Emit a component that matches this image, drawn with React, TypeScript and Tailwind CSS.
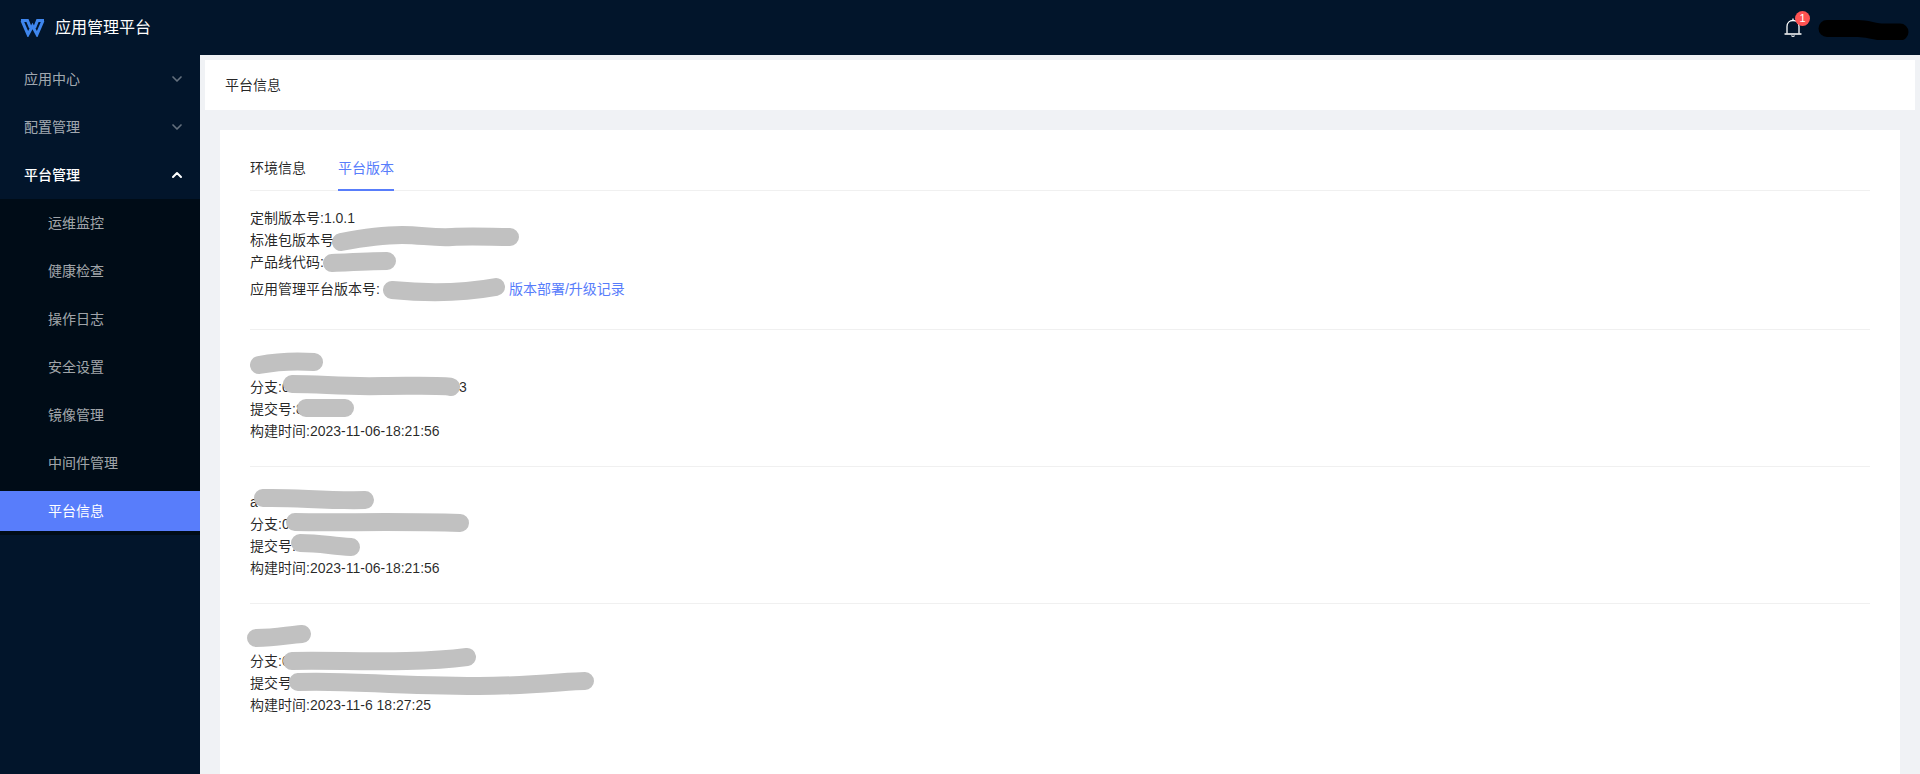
import React from 'react';
import { ChevronDown, ChevronUp } from 'lucide-react';

const FONT = 'font-["Liberation_Sans","Noto_Sans_CJK_SC",sans-serif]';

const subItems = ['运维监控', '健康检查', '操作日志', '安全设置', '镜像管理', '中间件管理', '平台信息'];

// grey marker strokes that hide parts of the text
const Scribble: React.FC<{ x: number; y: number; w: number; h: number; d: string; sw?: number; color?: string }> = ({
  x,
  y,
  w,
  h,
  d,
  sw = 18,
  color = '#c1c1c1',
}) => (
  <svg className="absolute" style={{ left: x, top: y }} width={w} height={h} viewBox={`0 0 ${w} ${h}`} fill="none">
    <path d={d} stroke={color} strokeWidth={sw} strokeLinecap="round" strokeLinejoin="round" />
  </svg>
);

const TopItem: React.FC<{ label: string; open?: boolean }> = ({ label, open }) => (
  <div className={`my-1 flex h-10 items-center justify-between pl-6 pr-[15px] ${open ? 'font-medium text-white' : 'text-[#ffffffa6]'}`}>
    <span>{label}</span>
    {open ? <ChevronUp size={16} strokeWidth={3} /> : <ChevronDown size={16} strokeWidth={2.5} className="opacity-60" />}
  </div>
);

const Row: React.FC<{ children: React.ReactNode; className?: string }> = ({ children, className = '' }) => (
  <div className={`h-[22px] whitespace-nowrap leading-[22px] ${className}`}>{children}</div>
);

const App: React.FC = () => {
  return (
    <div className={`flex h-[774px] w-[1920px] flex-col overflow-hidden bg-[#f0f2f5] text-sm text-[#000000d9] ${FONT}`}>
      {/* Header */}
      <header className="flex h-[55px] shrink-0 items-center bg-[#02152b] pl-5 pr-[10px] text-white">
        <svg width="25" height="18" viewBox="0 0 25 18" fill="none" stroke="#3f86ee" strokeWidth="3">
          <path d="M2 1.6L8 15.5L12.5 7L17 15.5L23 1.6" />
          <path d="M1 1.6H7.5L10.5 9" />
          <path d="M24 1.6H17.5L14.5 9" />
        </svg>
        <span className="ml-[10px] text-base">应用管理平台</span>
        <div className="ml-auto flex items-center">
          <div className="relative">
            <svg width="18" height="22" viewBox="0 0 18 22" fill="none" stroke="#ffffff" strokeWidth="1.3" className="block">
              <path d="M3 16.5V9.5C3 6 5.5 3.5 9 3.5C12.5 3.5 15 6 15 9.5V16.5" />
              <path d="M1 17H17" strokeLinecap="round" />
              <path d="M7.5 18.5C7.7 19.6 10.3 19.6 10.5 18.5" />
              <path d="M9 1.5V3.5" />
            </svg>
            <span className="absolute left-[11px] top-[-6px] flex h-[15px] w-[15px] items-center justify-center rounded-full bg-[#ff5252] text-[11px] leading-none text-white">
              1
            </span>
          </div>
          <div className="relative ml-4 h-6 w-[92px]">
            <Scribble x={0} y={0} w={92} h={24} sw={17} color="#000000" d="M9 12.5H40C50 12.5 56 16 66 16H82" />
          </div>
        </div>
      </header>

      <div className="flex min-h-0 flex-1">
        {/* Sidebar */}
        <aside className="flex w-[200px] shrink-0 flex-col bg-[#02152b]">
          <TopItem label="应用中心" />
          <TopItem label="配置管理" />
          <TopItem label="平台管理" open />
          <div className="flex flex-col bg-[#000c17]">
            {subItems.map((item) => (
              <div
                key={item}
                className={`my-1 flex h-10 items-center pl-12 ${item === '平台信息' ? 'bg-[#587dfb] text-white' : 'text-[#ffffffa6]'}`}
              >
                {item}
              </div>
            ))}
          </div>
        </aside>

        {/* Main */}
        <main className="min-w-0 flex-1 pt-[5px]">
          <div className="mx-[5px] flex h-[50px] items-center bg-white pl-5">平台信息</div>

          <div className="mx-5 mt-5 h-[700px] bg-white px-[30px] pt-[15px]">
            {/* Tabs */}
            <div className="mb-4 flex h-[46px] gap-8 border-b border-[#f0f0f0]">
              <div className="py-3 leading-[22px]">环境信息</div>
              <div className="h-[46px] border-b-2 border-[#587dfb] py-3 leading-[22px] text-[#587dfb]">平台版本</div>
            </div>

            {/* Versions */}
            <Row>定制版本号:1.0.1</Row>
            <Row className="relative">
              标准包版本号:
              <Scribble x={82} y={-5} w={200} h={30} d="M9 18C30 14 50 11 70 11C90 11 100 14 120 13C140 12 160 13 178 13" />
            </Row>
            <Row className="relative">
              产品线代码:
              <Scribble x={73} y={-5} w={90} h={30} d="M9 17C30 16 50 15 64 15" />
            </Row>
            <div className="relative flex h-8 items-center whitespace-nowrap">
              <span>应用管理平台版本号:</span>
              <Scribble x={133} y={0} w={130} h={32} d="M9 17C40 20 80 20 113 14" />
              <span className="ml-[129px] text-[#587dfb]">版本部署/升级记录</span>
            </div>

            <div className="my-6 h-px bg-[#f0f0f0]" />

            <Row className="relative">
              <Scribble x={0} y={-6} w={90} h={30} d="M9 17C30 13 50 13 64 14" />
            </Row>
            <Row className="relative">
              分支:0
              <Scribble x={33} y={-6} w={190} h={30} d="M9 14C40 14 60 17 100 16C130 16 160 15 168 17" />
              <span className="absolute left-[209px]">3</span>
            </Row>
            <Row className="relative">
              提交号:8
              <Scribble x={47} y={-6} w={70} h={30} d="M9 16H48" />
            </Row>
            <Row>构建时间:2023-11-06-18:21:56</Row>

            <div className="my-6 h-px bg-[#f0f0f0]" />

            <Row className="relative">
              a
              <Scribble x={4} y={-6} w={130} h={30} d="M9 13C40 12 70 16 111 15" />
            </Row>
            <Row className="relative">
              分支:0
              <Scribble x={36} y={-6} w={190} h={30} d="M9 15C50 16 110 14 174 16" />
            </Row>
            <Row className="relative">
              提交号:
              <Scribble x={41} y={-6} w={80} h={30} d="M9 14C30 14 40 17 60 18" />
            </Row>
            <Row>构建时间:2023-11-06-18:21:56</Row>

            <div className="my-6 h-px bg-[#f0f0f0]" />

            <Row className="relative">
              <Scribble x={-3} y={-8} w={80} h={30} d="M9 18C30 18 40 15 55 14" />
            </Row>
            <Row className="relative">
              分支:0
              <Scribble x={33} y={-6} w={200} h={30} d="M9 17C60 16 130 20 184 13" />
            </Row>
            <Row className="relative">
              提交号:
              <Scribble x={39} y={-5} w={320} h={30} d="M9 15C60 13 100 19 190 19C240 19 280 14 296 14" />
            </Row>
            <Row>构建时间:2023-11-6 18:27:25</Row>
          </div>
        </main>
      </div>
    </div>
  );
};

export default App;
